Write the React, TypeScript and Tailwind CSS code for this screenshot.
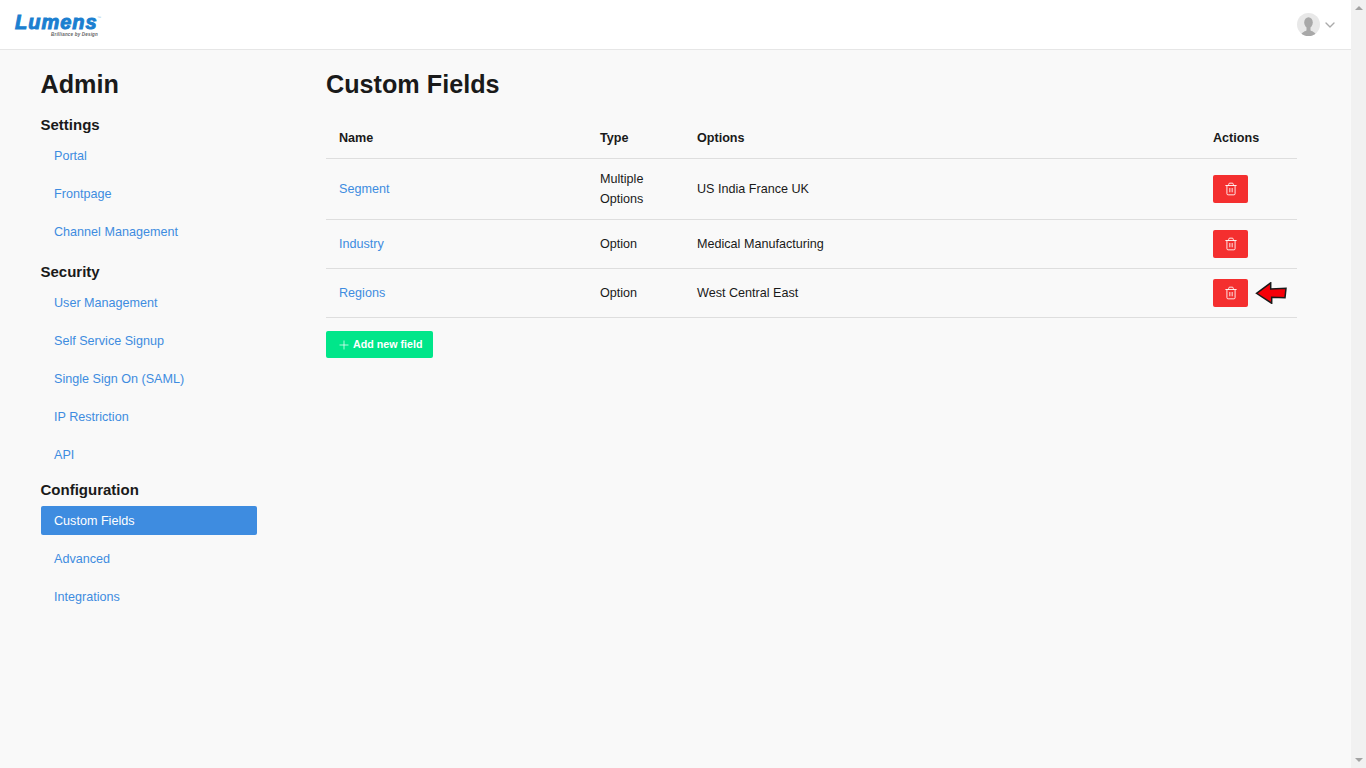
import { ChevronDown, Plus, Trash2 } from 'lucide-react';

const sections = [
  { title: 'Settings', gap: 'mt-[16px]', items: ['Portal', 'Frontpage', 'Channel Management'] },
  {
    title: 'Security',
    gap: 'mt-[17px]',
    items: ['User Management', 'Self Service Signup', 'Single Sign On (SAML)', 'IP Restriction', 'API'],
  },
  { title: 'Configuration', gap: 'mt-[12px]', items: ['Custom Fields', 'Advanced', 'Integrations'] },
];

const rows = [
  { name: 'Segment', type: 'Multiple Options', options: 'US India France UK', cell: 'h-[61px]' },
  { name: 'Industry', type: 'Option', options: 'Medical Manufacturing', cell: 'h-[49px]' },
  { name: 'Regions', type: 'Option', options: 'West Central East', cell: 'h-[49px]', arrow: true },
];

function Logo() {
  return (
    <div className="relative h-[24px] w-[90px]">
      <span className="absolute left-0 top-[-4px] text-[20px] font-bold italic leading-[26px] tracking-[1px] text-[#1b7fd0] [-webkit-text-stroke:1px_#1b7fd0]">
        Lumens
      </span>
      <span className="absolute left-[82px] top-[3px] text-[4px] leading-[4px] text-[#9cc4e4]">™</span>
      <span className="absolute left-[36px] top-[19px] whitespace-nowrap text-[4.500px] font-bold italic leading-[5px] tracking-[0.2px] text-[#666]">
        Brilliance by Design
      </span>
    </div>
  );
}

function Avatar() {
  return (
    <svg width="23" height="23" viewBox="0 0 23 23" aria-hidden="true">
      <defs>
        <clipPath id="avatar-clip">
          <circle cx="11.500" cy="11.500" r="11.500" />
        </clipPath>
      </defs>
      <circle cx="11.500" cy="11.500" r="11.500" fill="#e8e8e8" />
      <g clipPath="url(#avatar-clip)" fill="#a8a8a8">
        <ellipse cx="11.500" cy="9.500" rx="4.300" ry="5.200" />
        <rect x="9.500" y="13" width="4" height="5" />
        <path d="M3.500 23c.5-3 3.500-4.500 6-5.500h4c2.500 1 5.500 2.500 6 5.500z" />
      </g>
    </svg>
  );
}

function RedArrow() {
  return (
    <svg width="32" height="22" viewBox="0 0 32 22" aria-hidden="true" className="absolute left-[55px] top-1/2 -translate-y-1/2">
      <path d="M1.500 11.300 15.700.8 15.700 7 31 6.300 30 15.700 16.700 15.300 16.700 21.300z" fill="#f60008" stroke="#1a1a1a" strokeWidth="1.500" />
    </svg>
  );
}

export default function App() {
  return (
    <div className="flex h-[768px] overflow-hidden bg-[#f9f9f9] font-['Liberation_Sans',sans-serif] text-[12.600px] leading-[20px] text-[#1a1a1a]">
      <div className="min-w-0 flex-1">
        <header className="flex h-[50px] items-center justify-between border-b border-[#e6e6e6] bg-white pl-[15px] pr-[13.500px]">
          <Logo />
          <div className="flex items-center gap-[1.500px]">
            <Avatar />
            <ChevronDown className="h-[16px] w-[16px] text-[#aaa]" strokeWidth={2} />
          </div>
        </header>

        <div className="flex pl-[40.500px]">
          <aside className="w-[216.500px] shrink-0 pt-[19px]">
            <h1 className="text-[25.200px] font-bold leading-[31px]">Admin</h1>
            {sections.map((section) => (
              <div key={section.title}>
                <h2 className={`${section.gap} text-[15px] font-bold leading-[18px]`}>{section.title}</h2>
                <ul className="mt-[7px] flex flex-col gap-[9px]">
                  {section.items.map((item) => (
                    <li
                      key={item}
                      className={
                        item === 'Custom Fields'
                          ? 'flex h-[29px] items-center rounded-[2px] bg-[#3e8ce0] px-[13.500px] text-white'
                          : 'flex h-[29px] items-center px-[13.500px] text-[#3e8ce0]'
                      }
                    >
                      {item}
                    </li>
                  ))}
                </ul>
              </div>
            ))}
          </aside>

          <main className="ml-[69px] w-[971px] pt-[19px]">
            <h1 className="text-[25.200px] font-bold leading-[31px]">Custom Fields</h1>
            <table className="mt-[17px] w-full table-fixed border-collapse">
              <thead>
                <tr className="h-[41px] border-b border-[#dedede] text-left font-bold">
                  <th className="w-[261px] px-[13px] pt-[2px]">Name</th>
                  <th className="w-[97px] px-[13px] pt-[2px]">Type</th>
                  <th className="px-[13px] pt-[2px]">Options</th>
                  <th className="w-[97px] px-[13px] pt-[2px]">Actions</th>
                </tr>
              </thead>
              <tbody>
                {rows.map((row) => (
                  <tr key={row.name} className={`border-b border-[#dedede] ${row.cell}`}>
                    <td className="px-[13px] text-[#3e8ce0]">{row.name}</td>
                    <td className="px-[13px]">{row.type}</td>
                    <td className="px-[13px]">{row.options}</td>
                    <td className="relative px-[13px]">
                      <button className="flex h-[28px] w-[35px] items-center justify-center rounded-[2px] bg-[#f42f2f] text-white">
                        <Trash2 className="h-[14px] w-[14px]" strokeWidth={1.500} />
                      </button>
                      {row.arrow && <RedArrow />}
                    </td>
                  </tr>
                ))}
              </tbody>
            </table>
            <button className="mt-[13px] flex h-[27px] w-[107px] items-center rounded-[2px] bg-[#00e68a] pl-[11px] text-[10.700px] font-bold text-white">
              <Plus className="mr-[2px] mt-[2px] h-[14px] w-[14px]" strokeWidth={1.200} />
              Add new field
            </button>
          </main>
        </div>
      </div>

      <div className="flex w-[15px] shrink-0 flex-col items-center justify-between bg-[#f1f1f1] py-[6px]">
        <div className="h-0 w-0 border-x-[4px] border-b-[4px] border-x-transparent border-b-[#a3a3a3]" />
        <div className="h-0 w-0 border-x-[4px] border-t-[4px] border-x-transparent border-t-[#a3a3a3]" />
      </div>
    </div>
  );
}
